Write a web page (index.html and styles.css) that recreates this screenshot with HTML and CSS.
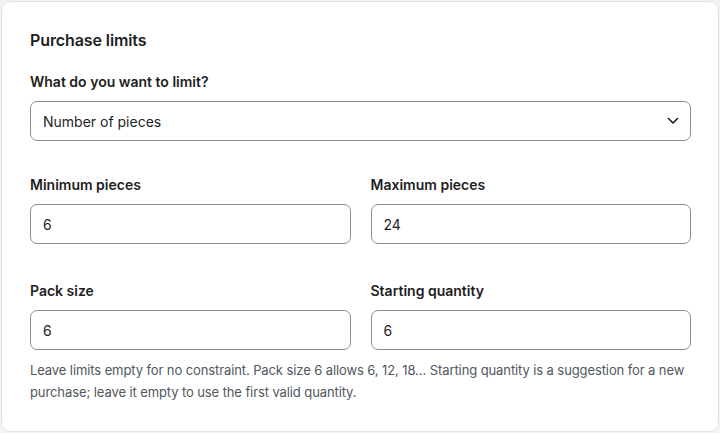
FILE: index.html
```html
<!DOCTYPE html>
<html lang="en">
<head>
  <meta charset="UTF-8">
  <meta name="viewport" content="width=device-width, initial-scale=1.0">
  <title>Purchase limits</title>
  <link rel="stylesheet" href="styles.css">
</head>
<body>
  <section class="card">
    <h2 class="card-title">Purchase limits</h2>

    <div class="field">
      <label class="field-label" for="limit-type">What do you want to limit?</label>
      <div class="select-wrap">
        <select id="limit-type" class="control">
          <option>Number of pieces</option>
          <option>Weight</option>
        </select>
        <svg class="chevron" width="12" height="8" viewBox="0 0 12 8" aria-hidden="true">
          <path d="M1.5 1.5 L6 6 L10.5 1.5" fill="none" stroke="#1e1e1e" stroke-width="1.6" stroke-linecap="round" stroke-linejoin="round"/>
        </svg>
      </div>
    </div>

    <div class="grid">
      <div class="field">
        <label class="field-label" for="min">Minimum pieces</label>
        <input id="min" class="control" type="text" value="6">
      </div>
      <div class="field">
        <label class="field-label" for="max">Maximum pieces</label>
        <input id="max" class="control" type="text" value="24">
      </div>
      <div class="field">
        <label class="field-label" for="pack">Pack size</label>
        <input id="pack" class="control" type="text" value="6">
      </div>
      <div class="field">
        <label class="field-label" for="start">Starting quantity</label>
        <input id="start" class="control" type="text" value="6">
      </div>
    </div>

    <p class="help">Leave limits empty for no constraint. Pack size 6 allows 6, 12, 18… Starting quantity is a suggestion for a new purchase; leave it empty to use the first valid quantity.</p>
  </section>
</body>
</html>
```

FILE: styles.css
```css
* {
  box-sizing: border-box;
  margin: 0;
  padding: 0;
}

body {
  background: #f3f3f3;
  color: #1e1e1e;
  font-family: Inter, "Noto Sans", Arial, sans-serif;
  padding: 1px;
}

.card {
  background: #fff;
  border: 1px solid #e4e4e4;
  border-radius: 9px;
  height: 431px;
  padding: 28px 27px 0 28px;
}

.card-title {
  font-size: 16px;
  font-weight: 600;
  line-height: 20px;
  letter-spacing: -0.1px;
  margin-bottom: 23px;
}

.field {
  display: flex;
  flex-direction: column;
}

.field-label {
  font-size: 14px;
  font-weight: 600;
  line-height: 18px;
  margin-bottom: 10px;
}

.control {
  appearance: none;
  -webkit-appearance: none;
  width: 100%;
  height: 40px;
  border: 1px solid #8c8f94;
  border-radius: 7px;
  background: #fff;
  color: #1e1e1e;
  font-family: inherit;
  font-size: 14px;
  padding: 0 12px;
}

.select-wrap {
  position: relative;
}

.chevron {
  position: absolute;
  right: 12px;
  top: 16px;
  pointer-events: none;
}

.grid {
  display: grid;
  grid-template-columns: 1fr 1fr;
  column-gap: 20px;
  row-gap: 38px;
  margin-top: 35px;
}

.help {
  font-size: 13px;
  line-height: 22px;
  letter-spacing: -0.1px;
  color: #50575e;
  margin-top: 9px;
}
```
